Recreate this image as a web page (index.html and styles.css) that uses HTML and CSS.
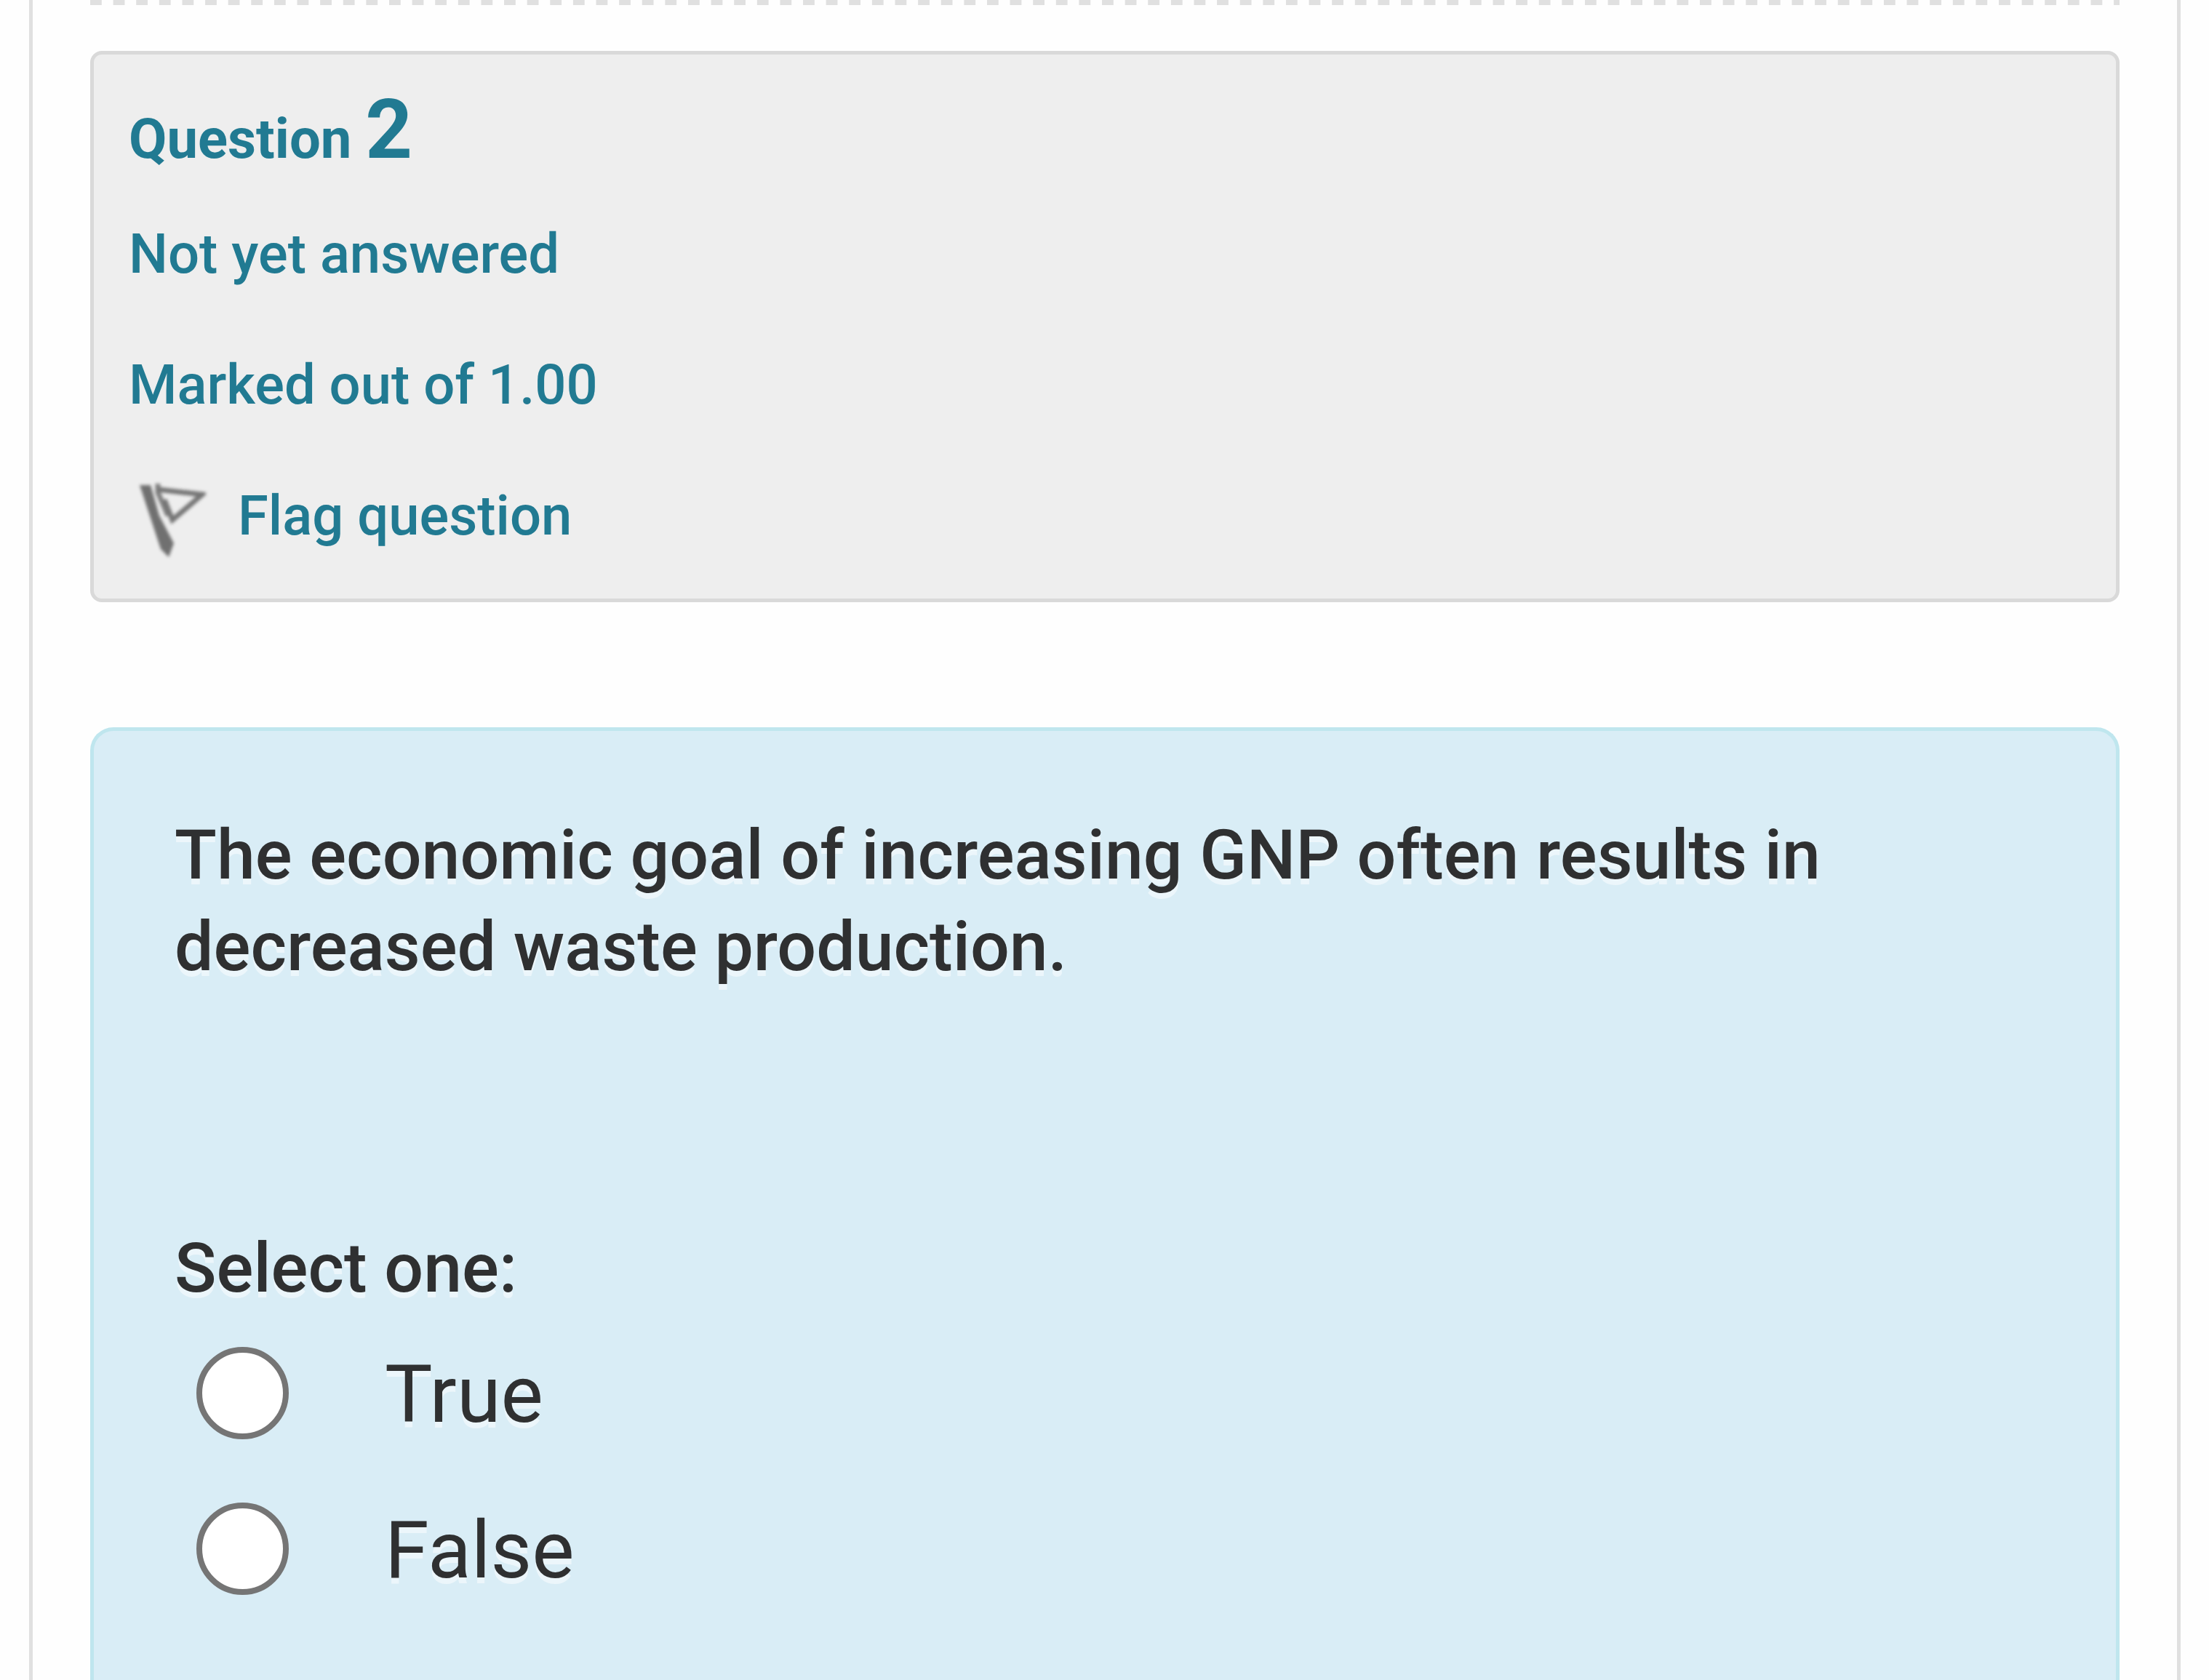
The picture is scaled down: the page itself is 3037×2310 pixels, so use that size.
FILE: index.html
```html
<!DOCTYPE html>
<html lang="en">
<head>
<meta charset="utf-8">
<title>Question 2</title>
<link rel="stylesheet" href="styles.css">
</head>
<body>
<main class="quiz">
  <svg class="divider" aria-hidden="true"><line x1="0" y1="2" x2="100%" y2="2" pathLength="1765" stroke="#e0e0e0" stroke-width="10" stroke-dasharray="10 10"/></svg>
  <section class="info">
    <h3 class="number">Question <span class="qno">2</span></h3>
    <p class="state">Not yet answered</p>
    <p class="grade">Marked out of 1.00</p>
    <a class="flag" href="#flag">
      <svg class="flag-icon" viewBox="0 0 106 120" aria-hidden="true">
        <path d="M15 18H30L42 60L62 98L55 117L44 106Z" fill="#707070"/>
        <path d="M40 16V28L54 60" fill="none" stroke="#808080" stroke-width="7"/>
        <path d="M40 24L101 31L60 66L49 38" fill="none" stroke="#757575" stroke-width="7"/>
      </svg>
      <span>Flag question</span>
    </a>
  </section>
  <form class="formulation">
    <p class="qtext">The economic goal of increasing GNP often results in decreased waste production.</p>
    <fieldset class="answers">
      <legend class="prompt">Select one:</legend>
      <div class="options">
        <label class="option"><input class="radio" type="radio" name="answer" value="1"><span>True</span></label>
        <label class="option"><input class="radio" type="radio" name="answer" value="0"><span>False</span></label>
      </div>
    </fieldset>
  </form>
</main>
</body>
</html>
```
FILE: styles.css
```css
* {
  box-sizing: border-box;
}

body {
  margin: 0;
  background: #fefefe;
  font-family: Roboto, sans-serif;
  color: #2f3031;
}

.quiz {
  display: flex;
  flex-direction: column;
  min-height: 100vh;
  margin: 0 39px 0 40px;
  padding: 0 79px;
  border: solid #e0e0e0;
  border-width: 0 5px;
}

.divider {
  display: block;
  width: 100%;
  height: 7px;
  margin-bottom: 63px;
}

.info {
  padding: 54px 48px 64px;
  border: 5px solid #d9d9d9;
  border-radius: 16px;
  background: #eeeeee;
  color: #217a92;
  font-size: 76px;
  font-weight: 500;
  line-height: 100px;
}

.number,
.state,
.grade {
  margin: 0;
}

.number {
  font-size: 76px;
  font-weight: 700;
}

.qno {
  font-size: 113px;
}

.state {
  margin-top: 58px;
}

.grade,
.flag {
  margin-top: 80px;
}

.flag {
  display: flex;
  align-items: center;
  gap: 44px;
  width: fit-content;
  color: inherit;
  text-decoration: none;
}

.flag-icon {
  width: 106px;
  height: 120px;
  margin: -10px 0;
  filter: blur(2px);
}

.formulation {
  flex: 1;
  margin-top: 172px;
  padding: 108px 111px 112px;
  border: 5px solid #bfe6ee;
  border-bottom: 0;
  border-radius: 32px 32px 0 0;
  background: #d9edf6;
  text-shadow: 0 8px 0 rgba(255, 255, 255, 0.5);
}

.qtext {
  margin: 0 0 316px;
  font-size: 95px;
  font-weight: 500;
  line-height: 126px;
}

.answers {
  margin: 0;
  padding: 0;
  border: 0;
}

.prompt {
  padding: 0;
  font-size: 95px;
  font-weight: 500;
  line-height: 126px;
}

.options {
  display: flex;
  flex-direction: column;
  gap: 82px;
  margin-top: 45px;
  padding-left: 30px;
}

.option {
  display: flex;
  align-items: flex-start;
  gap: 132px;
  width: fit-content;
  font-size: 110px;
  line-height: 132px;
}

.radio {
  appearance: none;
  width: 127px;
  height: 127px;
  margin: 0;
  border: 8px solid #757575;
  border-radius: 50%;
  background: #ffffff;
}

.radio:checked {
  box-shadow: inset 0 0 0 24px #ffffff;
  background: #757575;
}
```
